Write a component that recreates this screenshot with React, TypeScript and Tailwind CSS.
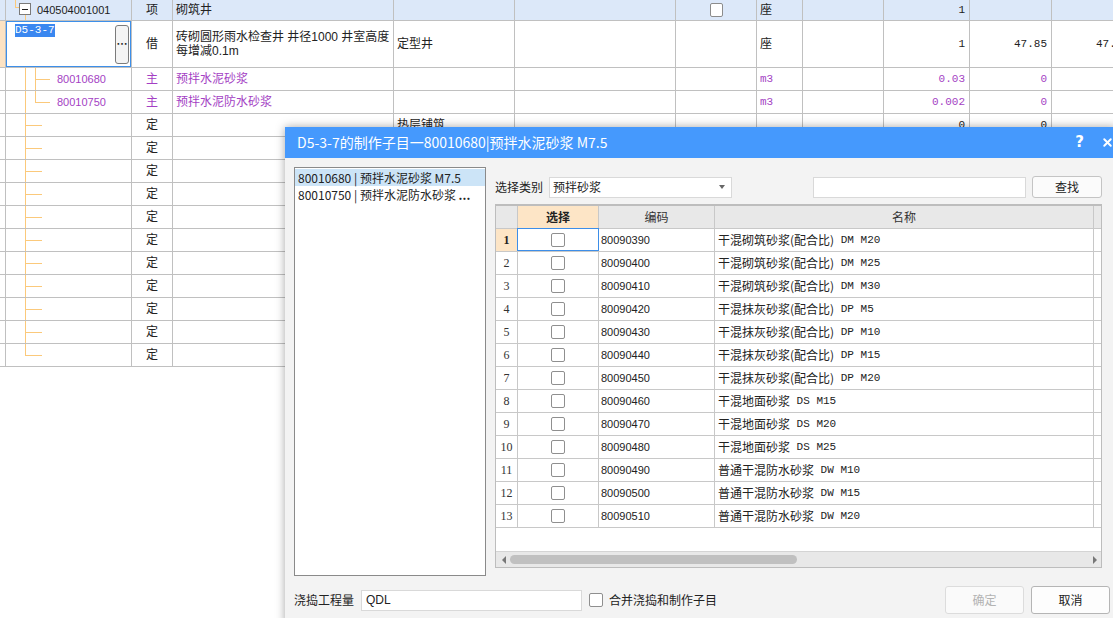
import React from "react";
import { X } from "lucide-react";

const W = [
  "w-[6px]",
  "w-[126px]",
  "w-[41px]",
  "w-[221px]",
  "w-[121px]",
  "w-[161px]",
  "w-[81px]",
  "w-[46px]",
  "w-[81px]",
  "w-[86px]",
  "w-[82px]",
  "w-[82px]",
];

const PURPLE = "text-[#a43fc4]";
const MONO = "font-['Liberation_Mono','Noto_Sans_CJK_SC',monospace]";

type CellDef = { content?: React.ReactNode; cls?: string };

function BgRow({ h, bg, cells }: { h: string; bg?: string; cells: CellDef[] }) {
  return (
    <div className={`flex shrink-0 border-b border-[#c0c0c0] ${h} ${bg ?? ""}`}>
      {W.map((w, i) => {
        const c = cells[i] ?? {};
        return (
          <div
            key={i}
            className={`${w} shrink-0 h-full border-r border-[#c0c0c0] relative flex items-center overflow-hidden ${c.cls ?? ""}`}
          >
            {c.content}
          </div>
        );
      })}
    </div>
  );
}

const TreeLine = ({ className }: { className: string }) => (
  <span className={`absolute bg-[#fbc97b] ${className}`} />
);

function Num({ children, purple }: { children: React.ReactNode; purple?: boolean }) {
  return (
    <span className={`ml-auto pr-[4px] text-[11px] ${MONO} ${purple ? PURPLE : "text-[#222]"}`}>{children}</span>
  );
}

function Background() {
  const rows: React.ReactNode[] = [];
  rows.push(
    <BgRow
      key="r1"
      h="h-[21px]"
      bg="bg-[#dce8f9]"
      cells={[
        {},
        {
          content: (
            <>
              <TreeLine className="left-[9px] top-0 w-[1px] h-[8px]" />
              <TreeLine className="left-[9px] top-[7px] w-[4px] h-[1px]" />
              <span className="absolute left-[13px] top-[3px] w-[12px] h-[12px] border border-[#7a7a7a] bg-white flex items-center justify-center">
                <span className="w-[6px] h-[1px] bg-[#222]" />
              </span>
              <TreeLine className="left-[19px] top-[15px] w-[1px] h-[6px]" />
              <span className="pl-[31px] text-[11px] text-[#222]">040504001001</span>
            </>
          ),
        },
        { content: <span className="w-full text-center text-[12px]">项</span> },
        { content: <span className="pl-[3px] text-[12px]">砌筑井</span> },
        {},
        {},
        {
          content: (
            <span className="mx-auto w-[13px] h-[14px] rounded-[2px] border border-[#8c8c8c] bg-white" />
          ),
        },
        { content: <span className="pl-[3px] text-[12px]">座</span> },
        {},
        { content: <Num>1</Num> },
        {},
        {},
      ]}
    />
  );
  rows.push(
    <BgRow
      key="r2"
      h="h-[47px]"
      cells={[
        { cls: "bg-[#fde3c3]" },
        {
          content: (
            <>
              <span className="absolute inset-0 border border-[#3d8fe9]" />
              <span
                className={`absolute left-[9px] top-[3px] h-[13px] leading-[13px] bg-[#3a87f0] text-white text-[11px] ${MONO}`}
              >
                D5-3-7
              </span>
              <span className="absolute left-[109px] top-[4px] w-[14px] h-[39px] rounded-[3px] border border-[#7b7b7b] bg-[#f4f4f4] flex items-center justify-center text-[11px] leading-none text-[#222] font-bold">
                ⋯
              </span>
            </>
          ),
        },
        { content: <span className="w-full text-center text-[12px]">借</span> },
        {
          content: (
            <span className="pl-[3px] text-[12px] leading-[14px] whitespace-nowrap">
              砖砌圆形雨水检查井 井径1000 井室高度
              <br />
              每增减0.1m
            </span>
          ),
        },
        { content: <span className="pl-[3px] text-[12px]">定型井</span> },
        {},
        {},
        { content: <span className="pl-[3px] text-[12px]">座</span> },
        {},
        { content: <Num>1</Num> },
        { content: <Num>47.85</Num> },
        { content: <Num>47.85</Num> },
      ]}
    />
  );
  const mats = [
    ["80010680", "预拌水泥砂浆", "0.03", false],
    ["80010750", "预拌水泥防水砂浆", "0.002", true],
  ] as const;
  mats.forEach(([code, name, qty, last]) => {
    rows.push(
      <BgRow
        key={code}
        h="h-[23px]"
        cells={[
          {},
          {
            content: (
              <>
                <TreeLine className="left-[19px] top-0 w-[1px] h-full" />
                <TreeLine className={`left-[29px] top-0 w-[1px] ${last ? "h-[12px]" : "h-full"}`} />
                <TreeLine className="left-[29px] top-[11px] w-[15px] h-[1px]" />
                <span className={`pl-[51px] text-[11px] ${PURPLE}`}>{code}</span>
              </>
            ),
          },
          { content: <span className={`w-full text-center text-[12px] ${PURPLE}`}>主</span> },
          { content: <span className={`pl-[3px] text-[12px] ${PURPLE}`}>{name}</span> },
          {},
          {},
          {},
          { content: <span className={`pl-[3px] text-[11px] ${MONO} ${PURPLE}`}>m3</span> },
          {},
          { content: <Num purple>{qty}</Num> },
          { content: <Num purple>0</Num> },
          {},
        ]}
      />
    );
  });
  for (let i = 0; i < 11; i++) {
    const last = i === 10;
    rows.push(
      <BgRow
        key={"d" + i}
        h="h-[23px]"
        cells={[
          {},
          {
            content: (
              <>
                <TreeLine className={`left-[19px] top-0 w-[1px] ${last ? "h-[12px]" : "h-full"}`} />
                <TreeLine className="left-[19px] top-[11px] w-[17px] h-[1px]" />
              </>
            ),
          },
          { content: <span className="w-full text-center text-[12px]">定</span> },
          {},
          { content: i === 0 ? <span className="pl-[3px] text-[12px]">热层铺筑</span> : null },
          {},
          {},
          {},
          {},
          { content: i === 0 ? <Num>0</Num> : null },
          { content: i === 0 ? <Num>0</Num> : null },
          {},
        ]}
      />
    );
  }
  return <div className="flex flex-col w-[1200px]">{rows}</div>;
}

const ITEMS = [
  ["80090390", "干混砌筑砂浆(配合比) DM M20"],
  ["80090400", "干混砌筑砂浆(配合比) DM M25"],
  ["80090410", "干混砌筑砂浆(配合比) DM M30"],
  ["80090420", "干混抹灰砂浆(配合比) DP M5"],
  ["80090430", "干混抹灰砂浆(配合比) DP M10"],
  ["80090440", "干混抹灰砂浆(配合比) DP M15"],
  ["80090450", "干混抹灰砂浆(配合比) DP M20"],
  ["80090460", "干混地面砂浆 DS M15"],
  ["80090470", "干混地面砂浆 DS M20"],
  ["80090480", "干混地面砂浆 DS M25"],
  ["80090490", "普通干混防水砂浆 DW M10"],
  ["80090500", "普通干混防水砂浆 DW M15"],
  ["80090510", "普通干混防水砂浆 DW M20"],
];

function splitName(n: string) {
  const idx = n.search(/ DM| DP| DS| DW/);
  return [n.slice(0, idx), n.slice(idx)];
}

function Dialog() {
  return (
    <div className="absolute left-[285px] top-[127px] w-[832px] h-[500px] bg-[#f3f3f3] shadow-[0_0_9px_rgba(0,0,0,0.35)] flex flex-col text-[#222]">
      <div className="h-[31px] shrink-0 bg-[#4599fd] flex items-center pl-[12px] pr-[3px] text-white">
        <span className="text-[14px] font-['Noto_Sans_CJK_SC',sans-serif]">
          D5-3-7的制作子目一80010680|预拌水泥砂浆 M7.5
        </span>
        <span className="ml-auto text-[15px] font-bold font-['DejaVu_Sans',sans-serif]">?</span>
        <X className="ml-[17px]" size={13} strokeWidth={3.6} />
      </div>
      <div className="flex pl-[9px] pt-[9px]">
        <div className="w-[192px] h-[409px] border border-[#8a8a8a] bg-white flex flex-col pt-[1px] text-[12px] font-['Noto_Sans_CJK_SC',sans-serif]">
          <div className="h-[17px] leading-[17px] bg-[#cce4f7] pl-[3px] whitespace-nowrap">
            80010680 | 预拌水泥砂浆 M7.5
          </div>
          <div className="h-[17px] leading-[17px] pl-[3px] whitespace-nowrap">
            80010750 | 预拌水泥防水砂浆 <b>...</b>
          </div>
        </div>
        <div className="ml-[9px] w-[607px] pt-[9px] flex flex-col">
          <div className="flex items-center h-[22px] text-[12px] font-['Noto_Sans_CJK_SC',sans-serif]">
            <span className="w-[54px]">选择类别</span>
            <div className="w-[183px] h-[21px] bg-white border border-[#d9d9d9] flex items-center pl-[3px]">
              预拌砂浆
              <span className="ml-auto mr-[6px] w-0 h-0 border-l-[3px] border-r-[3px] border-t-[4px] border-l-transparent border-r-transparent border-t-[#666]" />
            </div>
            <div className="ml-[81px] w-[213px] h-[21px] bg-white border border-[#d9d9d9]" />
            <div className="ml-[6px] w-[70px] h-[22px] bg-[#fbfbfb] border border-[#c4c4c4] rounded-[3px] flex items-center justify-center">
              查找
            </div>
          </div>
          <div className="mt-[6px] h-[364px] border border-t-2 border-[#bdbdbd] bg-white flex flex-col">
            <div className="flex h-[23px] shrink-0 border-b border-[#c8c8c8] bg-[#e8e8e8] text-[12px] font-['Noto_Sans_CJK_SC',sans-serif] text-[#333]">
              <div className="w-[22px] shrink-0 border-r border-[#c8c8c8]" />
              <div className="w-[81px] shrink-0 border-r border-[#c8c8c8] bg-[#fde5c6] flex items-center justify-center font-bold text-[#222]">
                选择
              </div>
              <div className="w-[116px] shrink-0 border-r border-[#c8c8c8] flex items-center justify-center">编码</div>
              <div className="w-[379px] shrink-0 border-r border-[#c8c8c8] flex items-center justify-center">名称</div>
              <div className="flex-1" />
            </div>
            {ITEMS.map(([code, name], i) => {
              const [cn, rest] = splitName(name);
              return (
                <div key={code} className="flex h-[23px] shrink-0 border-b border-[#c8c8c8]">
                  <div
                    className={`w-[22px] shrink-0 border-r border-[#c8c8c8] flex items-center justify-center text-[12px] font-['Liberation_Serif',serif] ${
                      i === 0 ? "bg-[#fde5c6] font-bold" : "text-[#333]"
                    }`}
                  >
                    {i + 1}
                  </div>
                  <div className="w-[81px] shrink-0 border-r border-[#c8c8c8] flex items-center justify-center relative">
                    {i === 0 && <span className="absolute -left-[1px] -top-[1px] right-[-1px] bottom-0 border border-[#3d8ee8]" />}
                    <span className="w-[14px] h-[14px] rounded-[2px] border border-[#8f8f8f] bg-white" />
                  </div>
                  <div className="w-[116px] shrink-0 border-r border-[#c8c8c8] flex items-center pl-[2px] text-[11px] font-['Liberation_Sans',sans-serif]">
                    {code}
                  </div>
                  <div className="w-[379px] shrink-0 border-r border-[#c8c8c8] flex items-center pl-[3px] whitespace-nowrap">
                    <span className="text-[12px] font-['Noto_Sans_CJK_SC',sans-serif]">{cn}</span>
                    <span className={`text-[11px] ${MONO} whitespace-pre`}>{rest}</span>
                  </div>
                  <div className="flex-1" />
                </div>
              );
            })}
            <div className="flex-1" />
            <div className="h-[16px] shrink-0 bg-[#e8e8e8] border-t border-[#d4d4d4] flex items-center">
              <span className="ml-[6px] w-0 h-0 border-t-[4px] border-b-[4px] border-r-[4px] border-t-transparent border-b-transparent border-r-[#777]" />
              <span className="ml-[4px] w-[287px] h-[9px] rounded-full bg-[#c0c0c0]" />
              <span className="ml-auto mr-[4px] w-0 h-0 border-t-[4px] border-b-[4px] border-l-[4px] border-t-transparent border-b-transparent border-l-[#777]" />
            </div>
          </div>
        </div>
      </div>
      <div className="mt-[10px] flex items-center h-[28px] pl-[9px] text-[12px] font-['Noto_Sans_CJK_SC',sans-serif]">
        <span className="w-[67px]">浇捣工程量</span>
        <div className="w-[221px] h-[21px] bg-white border border-[#d9d9d9] flex items-center pl-[4px] font-['Liberation_Sans',sans-serif]">
          QDL
        </div>
        <span className="ml-[7px] w-[14px] h-[14px] rounded-[2px] border border-[#8f8f8f] bg-white" />
        <span className="ml-[6px]">合并浇捣和制作子目</span>
        <div className="ml-auto w-[79px] h-[28px] rounded-[3px] border border-[#dcdcdc] bg-[#fafafa] text-[#b3b3b3] flex items-center justify-center">
          确定
        </div>
        <div className="ml-[7px] mr-[7px] w-[79px] h-[28px] rounded-[3px] border border-[#b5b5b5] bg-[#fdfdfd] flex items-center justify-center">
          取消
        </div>
      </div>
    </div>
  );
}

export default function App() {
  return (
    <div className="relative w-[1113px] h-[618px] overflow-hidden bg-white text-[#222] font-['Liberation_Sans','Noto_Sans_CJK_SC',sans-serif]">
      <Background />
      <Dialog />
    </div>
  );
}
